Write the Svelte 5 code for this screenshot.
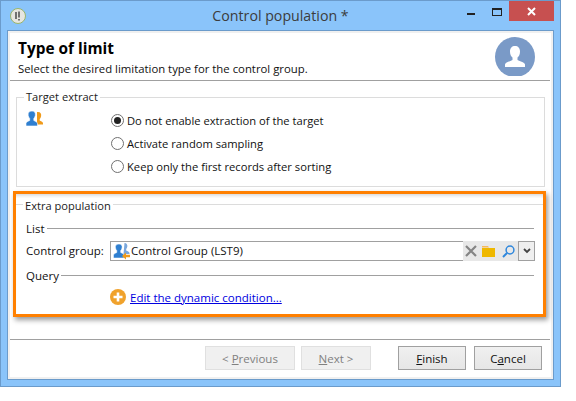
<script>
  const radios = [
    { label: "Do not enable extraction of the target", checked: true },
    { label: "Activate random sampling", checked: false },
    { label: "Keep only the first records after sorting", checked: false }
  ];
</script>

<div class="window">
  <div class="titlebar">
    <svg class="appicon" viewBox="0 0 16 16" width="16" height="16">
      <circle cx="8" cy="8" r="7.5" fill="#e6e6e0" stroke="#9ab56a" />
      <path d="M6 4v7M9 3.5v6M9 11v1.5" stroke="#555" stroke-width="1.6" fill="none" />
    </svg>
    <span class="title">Control population *</span>
    <div class="winbtns">
      <span class="min"></span>
      <span class="max"></span>
      <span class="close">
        <svg viewBox="0 0 9 9" width="9" height="9"><path d="M1 1l7 7M8 1l-7 7" stroke="#fff" stroke-width="2" /></svg>
      </span>
    </div>
  </div>

  <div class="client">
    <header class="head">
      <div class="headtext">
        <h1>Type of limit</h1>
        <p>Select the desired limitation type for the control group.</p>
      </div>
      <svg class="avatar" viewBox="0 0 40 39" width="40" height="39">
        <circle cx="20" cy="20" r="20" fill="#7a9ac7" />
        <path d="M10 30v-2.500c0-1.800 5-3.300 7.500-4.500v-2.500c-1.500-1-2.500-3-2.500-6 0-3.500 2-5.500 5-5.500s5 2 5 5.500c0 3-1 5-2.500 6v2.500c2.500 1.200 7.500 2.700 7.500 4.500v2.500z" fill="#fff" />
      </svg>
    </header>

    <fieldset class="group target">
      <legend>Target extract</legend>
      <svg class="people" viewBox="0 0 17 15" width="17" height="15">
        <path d="M12 1c2.500 0 3.600 2 3.100 4.200-.3 1.300-.8 2.200-1.400 2.800v1.500c.8.500 3.300 1.200 3.300 2.500v1.500h-6v-12.500z" fill="#f09a1a" />
        <path d="M6 0c2.600 0 3.800 2 3.300 4.500-.3 1.300-.8 2.300-1.500 3v2c1.300.7 3.700 1.500 3.700 3v2.500h-11.500v-2.500c0-1.500 2.400-2.300 3.700-3v-2c-.7-.7-1.200-1.700-1.500-3-.5-2.500.7-4.500 3.800-4.500z" fill="#2f7fd0" stroke="#fff" stroke-width=".6" />
      </svg>
      <div class="radios">
        {#each radios as r}
          <label class="radio">
            <span class="dot" class:on={r.checked}></span>
            <span>{r.label}</span>
          </label>
        {/each}
      </div>
    </fieldset>

    <section class="highlight">
      <div class="extra-title"><span>Extra population</span></div>
      <div class="sep-row list"><span>List</span><i></i></div>
      <div class="control">
        <span class="clabel">Control group:</span>
        <div class="input">
          <svg viewBox="0 0 17 17" width="17" height="17">
            <path d="M11.500 0c2.200 0 3.200 1.800 2.800 3.800-.2 1-.6 1.800-1.100 2.300v1.400c1 .5 3.300 1.200 3.300 2.500v1h-6z" fill="#7aa7dc" />
            <path d="M6 1c2.400 0 3.500 1.800 3 4-.2 1.200-.7 2-1.300 2.600v1.900c1.200.7 3.300 1.300 3.300 2.700v2.800h-10.500v-2.800c0-1.400 2.100-2 3.300-2.700v-1.900c-.6-.6-1.100-1.400-1.300-2.600-.5-2.200.6-4 3.500-4z" fill="#2f7fd0" stroke="#fff" stroke-width=".5" />
            <path d="M9 13l4-3.500v2.200h4v2.600h-4v2.200z" fill="#f09a1a" />
          </svg>
          <span class="val">Control Group (LST9)</span>
        </div>
        <div class="tools">
          <svg viewBox="0 0 12 12" width="12" height="12"><path d="M1 1l10 10M11 1l-10 10" stroke="#858585" stroke-width="2.200" /></svg>
          <svg viewBox="0 0 13 11" width="13" height="11"><path d="M0 0h6l1 1.500h-7z" fill="#f5b95a" /><path d="M0 2h13v9h-13z" fill="#efb800" /></svg>
          <svg class="search" viewBox="0 0 13 13" width="13" height="13"><circle cx="8" cy="5" r="3.900" fill="none" stroke="#2f87dc" stroke-width="1.500" /><path d="M5 8l-4 4" stroke="#2f87dc" stroke-width="2" /></svg>
        </div>
        <button class="drop" aria-label="Open">
          <svg viewBox="0 0 8 6" width="8" height="6"><path d="M1 1l3 3 3-3" fill="none" stroke="#444" stroke-width="1.800" /></svg>
        </button>
      </div>
      <div class="sep-row query"><span>Query</span><i></i></div>
      <div class="edit">
        <svg viewBox="0 0 16 16" width="16" height="16">
          <circle cx="8" cy="8" r="8" fill="#f0a22c" />
          <path d="M8 3.500v9M3.500 8h9" stroke="#fff" stroke-width="2.600" />
        </svg>
        <a href="#edit">Edit the dynamic condition...</a>
      </div>
    </section>

    <footer class="foot">
      <button class="btn prev" disabled>&lt; <u>P</u>revious</button>
      <button class="btn next" disabled><u>N</u>ext &gt;</button>
      <button class="btn finish"><u>F</u>inish</button>
      <button class="btn cancel">C<u>a</u>ncel</button>
    </footer>
  </div>
</div>

<style>
  :global(body) {
    margin: 0;
    background: #fff;
  }
  .window {
    box-sizing: border-box;
    width: 561px;
    height: 387px;
    background: #8ac4fa;
    border: 1px solid #6b9bcb;
    font-family: "Open Sans", "Noto Sans", sans-serif;
    font-size: 11.5px;
    color: #111;
    display: flex;
    flex-direction: column;
  }
  .titlebar {
    height: 29px;
    flex: none;
    display: flex;
    position: relative;
    justify-content: center;
  }
  .appicon {
    position: absolute;
    left: 9px;
    top: 7px;
  }
  .title {
    font-size: 14.2px;
    line-height: 30px;
    color: #3c3c3c;
  }
  .winbtns {
    position: absolute;
    right: 6px;
    top: 0;
    height: 20px;
    display: flex;
  }
  .min {
    width: 8px;
    height: 2px;
    margin: 12px 17px 0 0;
    background: #222;
  }
  .max {
    box-sizing: border-box;
    width: 10px;
    height: 8px;
    margin: 7px 7px 0 0;
    border: 1px solid #222;
    border-top-width: 2px;
  }
  .close {
    width: 45px;
    height: 20px;
    background: #c75050;
    display: flex;
    align-items: center;
    justify-content: center;
  }
  .client {
    box-sizing: border-box;
    flex: none;
    width: 547px;
    height: 350px;
    margin-left: 6px;
    border: 1px solid #6b9bcb;
    background: #fff;
    box-shadow: inset 0 0 0 2px #f0f0f0;
    padding: 2px;
    display: flex;
    flex-direction: column;
  }
  .head {
    flex: none;
    height: 47px;
    display: flex;
    justify-content: space-between;
    border-bottom: 1px solid #a0a0a0;
    box-sizing: content-box;
    width: 540px;
  }
  .headtext {
    padding: 6px 0 0 8px;
  }
  h1 {
    margin: 0;
    font-size: 15.4px;
    line-height: 20px;
    font-weight: 700;
    color: #000;
  }
  p {
    margin: 1px 0 0;
    font-size: 11.35px;
    line-height: 18px;
  }
  .avatar {
    margin: 4px 15px 0 0;
  }
  .group {
    box-sizing: border-box;
    margin: 8px 0 0 6px;
    padding: 0;
    border: 1px solid #dcdcdc;
    width: 529px;
    height: 98px;
    display: flex;
  }
  legend {
    margin-left: 7px;
    padding: 0 2px 0 2px;
    line-height: 16px;
    font-size: 11.1px;
    color: #222;
  }
  .target {
    position: relative;
  }
  .people {
    position: absolute;
    left: 9px;
    top: 6px;
  }
  .radios {
    padding: 5px 0 0 94px;
    display: flex;
    flex-direction: column;
    gap: 3px;
    font-size: 11.2px;
  }
  .radio {
    display: flex;
    align-items: center;
    height: 20px;
    gap: 3px;
  }
  .dot {
    box-sizing: border-box;
    width: 13px;
    height: 13px;
    border-radius: 50%;
    border: 1px solid #707070;
    background: #fff;
    position: relative;
  }
  .dot.on::after {
    content: "";
    position: absolute;
    left: 2px;
    top: 2px;
    width: 7px;
    height: 7px;
    border-radius: 50%;
    background: #222;
  }
  .highlight {
    box-sizing: border-box;
    width: 533px;
    height: 126px;
    margin: 4px 0 0 3px;
    border: 3px solid #ff8000;
    box-shadow: 2px 3px 5px rgba(0, 0, 0, 0.4), inset 0 4px 4px -3px rgba(0, 0, 0, 0.2);
    display: flex;
    flex-direction: column;
    padding: 0 9px 0 0;
  }
  .extra-title {
    height: 18px;
    margin: 4px -9px 0 0;
    padding-left: 7px;
    background: linear-gradient(#fff 6px, #dcdcdc 6px, #dcdcdc 7px, #fff 7px);
  }
  .extra-title span {
    background: #fff;
    padding: 0 2px 0 2px;
    line-height: 16px;
    font-size: 11.1px;
    color: #222;
    display: inline-block;
  }
  .sep-row {
    display: flex;
    align-items: center;
    gap: 2px;
    padding-left: 10px;
    height: 16px;
  }
  .list {
    margin-top: 4px;
  }
  .query {
    margin-top: 6px;
  }
  .sep-row i {
    flex: 1;
    height: 1px;
    background: #a0a0a0;
  }
  .control {
    display: flex;
    align-items: stretch;
    height: 20px;
    margin-top: 5px;
    padding-left: 10px;
  }
  .clabel {
    width: 84px;
    flex: none;
    line-height: 19px;
  }
  .input {
    box-sizing: border-box;
    width: 353px;
    flex: none;
    display: flex;
    align-items: center;
    gap: 1px;
    padding-left: 2px;
    border: 1px solid #a0a0a0;
    border-right: 0;
  }
  .val {
    line-height: 16px;
  }
  .tools {
    width: 55px;
    flex: none;
    background: #e8e8e8;
    display: flex;
    align-items: center;
    padding-left: 2px;
    gap: 5px;
    box-sizing: border-box;
  }
  .search {
    margin-left: 2px;
  }
  .drop {
    box-sizing: border-box;
    width: 17px;
    flex: none;
    padding: 0;
    border: 1px solid #a0a0a0;
    background: #efefef;
    display: flex;
    align-items: center;
    justify-content: center;
  }
  .edit {
    display: flex;
    align-items: center;
    gap: 4px;
    margin: 5px 0 0 94px;
    height: 18px;
  }
  a {
    color: #0000e0;
    text-decoration: underline;
  }
  .foot {
    flex: none;
    width: 540px;
    margin-top: 22px;
    border-top: 1px solid #a0a0a0;
    display: flex;
    padding: 6px 0 0 195px;
    box-sizing: border-box;
    height: 33px;
  }
  .btn {
    box-sizing: border-box;
    height: 24px;
    padding: 0;
    font: inherit;
    color: #111;
    border: 1px solid #a0a0a0;
    background: linear-gradient(#f0f0f0, #e6e6e6);
  }
  .btn:disabled {
    color: #808080;
    border: 1px solid #e0e0e0;
    background: #f0f0f0;
  }
  .prev {
    width: 90px;
  }
  .next {
    width: 70px;
    margin-left: 6px;
  }
  .finish {
    width: 68px;
    margin-left: 27px;
  }
  .cancel {
    width: 68px;
    margin-left: 8px;
  }
</style>
